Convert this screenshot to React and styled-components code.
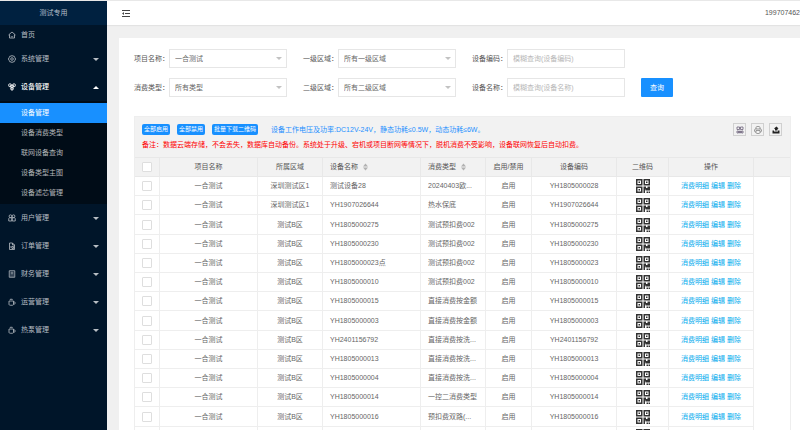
import React from 'react';
import styled, { createGlobalStyle } from 'styled-components';

const icons = {
  home: (
    <>
      <path d="M1 8l7-6 7 6M3 7v7h10V7" />
      <path d="M5.5 10.5c1.5 1.5 3.5 1.5 5 0" />
    </>
  ),
  setting: (
    <>
      <path d="M8 1l2 1.2 2.4.2.6 2.3 2 1.3-.8 2 .8 2-2 1.3-.6 2.3-2.4.2L8 15l-2-1.2-2.4-.2L3 11.300 1 10l.8-2L1 6l2-1.300.6-2.300L6 2.200z" />
      <circle cx="8" cy="8" r="2.6" />
    </>
  ),
  device: (
    <>
      <circle cx="4" cy="4.5" r="3" />
      <circle cx="12" cy="4.5" r="3" />
      <circle cx="8" cy="11" r="3" />
      <path d="M4 4.5l4 6.5 4-6.5zM8 8v7" />
    </>
  ),
  user: (
    <>
      <circle cx="5" cy="4.5" r="2.8" />
      <circle cx="11" cy="4.5" r="2.8" />
      <path d="M1.5 14V9.5c0-1.500 1-2.200 3-2.200h3V14zM8.500 14V7.300h3c2 0 3 .7 3 2.200V14z" />
    </>
  ),
  order: <path d="M3 2h6l4 4v9H3zM9 2v4h4M6 8v4M8 9v4h3V9z" />,
  finance: <path d="M2.5 1.5h11v13h-11zM5 4.5h6M5 7.5h6M5 10h2M9 10h2M5 12.5h2M9 12.5h2" />,
  cup: <path d="M2 6h9v6c0 2-1 2.500-2 2.500H4.500C3 14.500 2 14 2 12zM11 8h2c2 0 2 4 0 4h-2M4.500 4V2.500h4V4" />,
};

const menu = [
  { name: '首页', icon: 'home', leaf: true },
  { name: '系统管理', icon: 'setting' },
  {
    name: '设备管理',
    icon: 'device',
    children: ['设备管理', '设备消费类型', '联网设备查询', '设备类型主图', '设备滤芯管理'],
  },
  { name: '用户管理', icon: 'user' },
  { name: '订单管理', icon: 'order' },
  { name: '财务管理', icon: 'finance' },
  { name: '运营管理', icon: 'cup' },
  { name: '热泵管理', icon: 'cup' },
];

const filters = [
  { id: 'project', label: '项目名称：', value: '一合测试' },
  { id: 'area1', label: '一级区域：', value: '所有一级区域' },
  { id: 'code', label: '设备编码：', placeholder: '模糊查询(设备编码)' },
  { id: 'type', label: '消费类型：', value: '所有类型' },
  { id: 'area2', label: '二级区域：', value: '所有二级区域' },
  { id: 'name', label: '设备名称：', placeholder: '模糊查询(设备名称)' },
];

const rows = [
  ['深圳测试区1', '测试设备28', '20240403欧...', 'YH1805000028'],
  ['深圳测试区1', 'YH1907026644', '热水保底', 'YH1907026644'],
  ['测试B区', 'YH1805000275', '测试预扣费002', 'YH1805000275'],
  ['测试B区', 'YH1805000230', '测试预扣费002', 'YH1805000230'],
  ['测试B区', 'YH1805000023点', '测试预扣费002', 'YH1805000023'],
  ['测试B区', 'YH1805000010', '测试预扣费002', 'YH1805000010'],
  ['测试B区', 'YH1805000015', '直接消费按金额', 'YH1805000015'],
  ['测试B区', 'YH1805000003', '直接消费按金额', 'YH1805000003'],
  ['测试B区', 'YH2401156792', '直接消费按洗...', 'YH2401156792'],
  ['测试B区', 'YH1805000013', '直接消费按洗...', 'YH1805000013'],
  ['测试B区', 'YH1805000004', '直接消费按洗...', 'YH1805000004'],
  ['测试B区', 'YH1805000014', '一控二消费类型', 'YH1805000014'],
  ['测试B区', 'YH1805000016', '预扣费双路(...', 'YH1805000016'],
  ['测试B区', 'YH1805000017', '预扣费双路(...', 'YH1805000017'],
];

const columnWidths = [25, 98, 65, 98, 65, 46, 85, 52, 85];

const SortMark = () => (
  <SortIcon viewBox="0 0 10 16" aria-hidden="true">
    <path d="M0 7l5-6 5 6zM0 9h10l-5 6z" />
  </SortIcon>
);

const QrCode = () => (
  <QrIcon viewBox="0 0 28 28" role="img" aria-label="二维码">
    <path d="M1.500 1.500h10v10h-10zM16.500 1.500h10v10h-10zM1.500 16.500h10v10h-10z" fill="none" stroke="#333" strokeWidth="3" />
    <path d="M5 5h3v3H5zM20 5h3v3h-3zM5 20h3v3H5z" />
    <path d="M15 15h5v3h3v-3h5v8h-9v-2h-1v7h-3zM21 25h3v3h-3zM25 25h3v3h-3z" />
  </QrIcon>
);

const App = () => (
  <>
    <GlobalStyle />
    <Layout>
      <Sidebar>
        <Brand>测试专用</Brand>
        <nav>
          {menu.map((item) => (
            <React.Fragment key={item.name}>
              <MenuItem href="#" $leaf={item.leaf} $open={!!item.children}>
                <MenuIcon viewBox="0 0 16 16" aria-hidden="true">{icons[item.icon]}</MenuIcon>
                <span>{item.name}</span>
                {!item.leaf && (
                  <MenuArrow viewBox="0 0 6 3" aria-hidden="true">
                    <path d={item.children ? 'M0 3l3-3 3 3z' : 'M0 0h6L3 3z'} />
                  </MenuArrow>
                )}
              </MenuItem>
              {item.children && (
                <SubMenu>
                  {item.children.map((child, i) => (
                    <SubItem href="#" key={child} $active={i === 0}>{child}</SubItem>
                  ))}
                </SubMenu>
              )}
            </React.Fragment>
          ))}
        </nav>
      </Sidebar>

      <Main>
        <TopBar>
          <FoldButton type="button" aria-label="收起菜单">
            <svg viewBox="0 0 16 14" width="8" height="7" aria-hidden="true">
              <path d="M0 1h16M6 7h10M0 13h16" fill="none" stroke="#444" strokeWidth="2" />
              <path d="M0 7l4-3v6z" fill="#444" />
            </svg>
          </FoldButton>
          <span>199707462</span>
        </TopBar>

        <Card>
          <FilterForm onSubmit={(e) => e.preventDefault()}>
            <Fields>
              {filters.map((f) => (
                <Field key={f.id}>
                  <label htmlFor={f.id}>{f.label}</label>
                  {f.value ? (
                    <SelectWrap>
                      <Select id={f.id} defaultValue={f.value}>
                        <option>{f.value}</option>
                      </Select>
                      <SelectArrow viewBox="0 0 6 3" aria-hidden="true">
                        <path d="M0 0h6L3 3z" />
                      </SelectArrow>
                    </SelectWrap>
                  ) : (
                    <Input id={f.id} type="text" placeholder={f.placeholder} />
                  )}
                </Field>
              ))}
            </Fields>
            <SearchButton type="submit">查询</SearchButton>
          </FilterForm>

          <TableBox>
            <Toolbar>
              <ToolbarRow>
                <SmallButton type="button">全部启用</SmallButton>
                <SmallButton type="button">全部禁用</SmallButton>
                <SmallButton type="button">批量下载二维码</SmallButton>
                <Hint>设备工作电压及功率:DC12V-24V，静态功耗≤0.5W，动态功耗≤6W。</Hint>
                <Tools>
                  <ToolButton type="button" aria-label="筛选列">
                    <svg viewBox="0 0 16 16" fill="none" stroke="#6b5f78" strokeWidth="1.6" aria-hidden="true">
                      <path d="M2 2h5v5H2zM9 2h5v5H9zM2 10h3v4H2zM7 10h2v4H7zM11 10h3v4h-3z" />
                    </svg>
                  </ToolButton>
                  <ToolButton type="button" aria-label="打印">
                    <svg viewBox="0 0 16 16" fill="none" stroke="#777" strokeWidth="1.4" aria-hidden="true">
                      <path d="M4 6V3c0-1 1-2 2-2h4c1 0 2 1 2 2v3M4 12H3c-1 0-2-1-2-2V8c0-1 1-2 2-2h10c1 0 2 1 2 2v2c0 1-1 2-2 2h-1M4 9h8v4c0 1-1 2-2 2H6c-1 0-2-1-2-2z" />
                    </svg>
                  </ToolButton>
                  <ToolButton type="button" aria-label="导出">
                    <svg viewBox="0 0 16 16" fill="#222" aria-hidden="true">
                      <path d="M9 1l4 4-2 1v3H6V6L4 5zM1 9h3v2h8V9h3v6H1z" />
                    </svg>
                  </ToolButton>
                </Tools>
              </ToolbarRow>
              <Warning>
                备注：数据云端存储，不会丢失，数据库自动备份。系统处于升级、宕机或项目断网等情况下，脱机消费不受影响，设备联网恢复后自动扣费。
              </Warning>
            </Toolbar>

            <DataTable>
              <colgroup>
                {columnWidths.map((width, i) => (
                  <col key={i} style={{ width }} />
                ))}
                <col />
              </colgroup>
              <thead>
                <tr>
                  <Th><Checkbox type="checkbox" aria-label="全选" /></Th>
                  <Th>项目名称</Th>
                  <Th>所属区域</Th>
                  <Th $left>设备名称<SortMark /></Th>
                  <Th $left>消费类型<SortMark /></Th>
                  <Th>启用/禁用</Th>
                  <Th>设备编码</Th>
                  <Th>二维码</Th>
                  <Th>操作</Th>
                  <Th $blank />
                </tr>
              </thead>
              <tbody>
                {rows.map(([area, name, type, code]) => (
                  <tr key={code}>
                    <Td><Checkbox type="checkbox" aria-label={code} /></Td>
                    <Td>一合测试</Td>
                    <Td>{area}</Td>
                    <Td $left>{name}</Td>
                    <Td $left>{type}</Td>
                    <Td>启用</Td>
                    <Td>{code}</Td>
                    <Td><QrCode /></Td>
                    <Td>
                      <Action href="#">消费明细</Action> <Action href="#">编辑</Action> <Action href="#">删除</Action>
                    </Td>
                    <Td $blank />
                  </tr>
                ))}
              </tbody>
            </DataTable>
          </TableBox>
        </Card>
      </Main>
    </Layout>
  </>
);

export default App;

const GlobalStyle = createGlobalStyle`
  * {
    box-sizing: border-box;
  }

  body {
    margin: 0;
    background-color: #f0f0f0;
  }

  body, button, input, select {
    font-family: "Liberation Sans", "Noto Sans CJK SC", sans-serif;
    font-size: 7px;
    line-height: 10px;
    color: #555;
  }

  a {
    text-decoration: none;
  }
`;

const Layout = styled.div`
  display: flex;
  height: 100vh;
  overflow: hidden;
  border-top: 1px solid #e8e8e8;
`;

const Sidebar = styled.aside`
  flex: 0 0 107px;
  background-color: #001529;
`;

const Brand = styled.div`
  height: 24px;
  line-height: 24px;
  text-align: center;
  background-color: #002140;
  color: #b5bfc8;
`;

const MenuItem = styled.a`
  display: flex;
  align-items: center;
  gap: 5px;
  height: ${props => props.$leaf ? '20px' : '28px'};
  padding: 0 8px;
  color: ${props => props.$open ? '#fff' : '#b8bec4'};
  font-weight: ${props => props.$open ? 500 : 400};
`;

const MenuIcon = styled.svg`
  width: 8px;
  height: 8px;
  fill: none;
  stroke: currentColor;
  stroke-width: 1.6;
`;

const MenuArrow = styled.svg`
  width: 6px;
  height: 3px;
  margin-left: auto;
  fill: currentColor;
`;

const SubMenu = styled.div`
  padding: 2px 0 1px;
  background-color: #000c17;
`;

const SubItem = styled.a`
  display: block;
  height: 20px;
  line-height: 20px;
  padding-left: 21px;
  background-color: ${props => props.$active ? '#1890ff' : 'transparent'};
  color: ${props => props.$active ? '#fff' : '#b3b6b9'};
`;

const Main = styled.main`
  flex: 1;
  min-width: 0;
`;

const TopBar = styled.header`
  display: flex;
  align-items: center;
  justify-content: space-between;
  height: 24px;
  padding-left: 15px;
  background-color: #fff;
  box-shadow: 0 1px 1px rgba(0, 0, 0, 0.05);
`;

const FoldButton = styled.button`
  display: flex;
  padding: 0;
  border: none;
  background: none;
`;

const Card = styled.section`
  margin: 13px 0 0 12px;
  padding: 11px 9px 11px 15px;
  background-color: #fff;
`;

const FilterForm = styled.form`
  display: flex;
  align-items: flex-end;
  gap: 16px;
`;

const Fields = styled.div`
  display: grid;
  grid-template-columns: repeat(3, 153px);
  gap: 10px 16px;
`;

const Field = styled.div`
  display: flex;
  align-items: center;

  label {
    flex: 0 0 34px;
    white-space: nowrap;
  }
`;

const SelectWrap = styled.div`
  flex: 1;
  position: relative;
`;

const Select = styled.select`
  display: block;
  appearance: none;
  width: 100%;
  height: 19px;
  padding: 0 5px;
  border: 1px solid #e6e6e6;
  border-radius: 0;
  background-color: #fff;
  color: #666;
`;

const SelectArrow = styled.svg`
  position: absolute;
  top: 8px;
  right: 5px;
  width: 6px;
  height: 3px;
  fill: #c2c2c2;
  pointer-events: none;
`;

const Input = styled.input`
  flex: 1;
  min-width: 0;
  height: 19px;
  padding: 0 5px;
  border: 1px solid #e6e6e6;

  &::placeholder {
    color: #b8b8b8;
  }
`;

const SearchButton = styled.button`
  height: 19px;
  padding: 0 9px;
  border: none;
  border-radius: 1px;
  background-color: #1890ff;
  color: #fff;
`;

const TableBox = styled.div`
  margin-top: 19px;
  border: 1px solid #eee;
`;

const Toolbar = styled.div`
  padding: 6px 8px 7px 7px;
  background-color: #f2f2f2;
`;

const ToolbarRow = styled.div`
  display: flex;
  align-items: center;
  gap: 7px;
`;

const SmallButton = styled.button`
  height: 11px;
  padding: 0 2px;
  border: none;
  border-radius: 2px;
  background-color: #1890ff;
  color: #fff;
  font-size: 6px;
  line-height: 11px;
  white-space: nowrap;
`;

const Hint = styled.span`
  padding-left: 6px;
  color: #1e90ff;
  white-space: nowrap;
`;

const Tools = styled.div`
  display: flex;
  gap: 5px;
  margin-left: auto;
`;

const ToolButton = styled.button`
  display: flex;
  align-items: center;
  justify-content: center;
  width: 13px;
  height: 13px;
  padding: 0;
  border: 1px solid #d0d0d0;
  background: none;

  svg {
    width: 8px;
    height: 8px;
  }
`;

const Warning = styled.p`
  margin: 4px 0 0;
  color: #f00;
  white-space: nowrap;
`;

const DataTable = styled.table`
  width: 100%;
  height: 289px;
  table-layout: fixed;
  border-collapse: separate;
  border-spacing: 0;
`;

const Th = styled.th`
  height: 20px;
  padding: 0 ${props => props.$left ? '7px' : '0'};
  border: solid #e8e8e8;
  border-width: 1px ${props => props.$blank ? '0' : '1px'} 1px 0;
  background-color: #f2f2f2;
  font-weight: 400;
  text-align: ${props => props.$left ? 'left' : 'center'};
  white-space: nowrap;
`;

const Td = styled.td`
  padding: 0 ${props => props.$left ? '7px' : '0'};
  border: solid #eee;
  border-width: ${props => props.$blank ? '0' : '0 1px 1px 0'};
  color: #666;
  text-align: ${props => props.$left ? 'left' : 'center'};
  white-space: nowrap;
`;

const Checkbox = styled.input`
  appearance: none;
  display: block;
  width: 10px;
  height: 10px;
  margin: 0 auto;
  border: 1px solid #dedede;
  border-radius: 1px;
  background-color: #fff;
`;

const SortIcon = styled.svg`
  width: 5px;
  height: 8px;
  margin-left: 5px;
  vertical-align: middle;
  fill: #b2b2b2;
`;

const QrIcon = styled.svg`
  display: block;
  width: 14px;
  height: 14px;
  margin: 0 auto;
  fill: #333;
`;

const Action = styled.a`
  color: #01aaed;
`;
